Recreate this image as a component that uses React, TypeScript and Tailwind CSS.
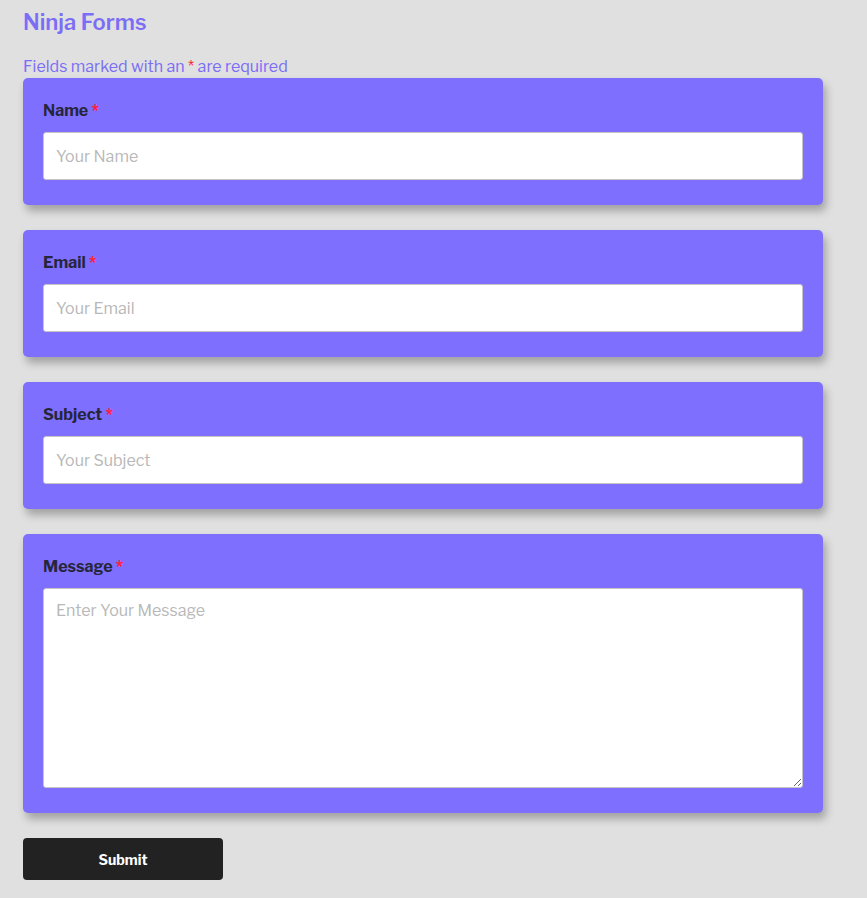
import React from 'react';

interface FieldProps {
  label: string;
  placeholder: string;
  multiline?: boolean;
}

const Field: React.FC<FieldProps> = ({ label, placeholder, multiline = false }) => (
  <div className="w-[800px] rounded-[5px] bg-[#7f6fff] px-5 pt-[22px] pb-[25px] shadow-[3px_6px_8px_rgba(0,0,0,0.28)]">
    <label className="block text-[16px] font-bold leading-[22px] text-[#26263a] mb-[10px]">
      {label} <span className="text-[#ff1f3d]">*</span>
    </label>
    {multiline ? (
      <textarea
        placeholder={placeholder}
        className="block w-full h-[200px] rounded-[3px] border border-[#c6c6c6] bg-white px-3 py-[10px] text-[16px] text-[#333] placeholder:text-[#b8b8b8] outline-none resize-y"
      />
    ) : (
      <input
        placeholder={placeholder}
        className="block w-full h-[48px] rounded-[3px] border border-[#c6c6c6] bg-white px-3 text-[16px] text-[#333] placeholder:text-[#b8b8b8] outline-none"
      />
    )}
  </div>
);

export default function App() {
  return (
    <div
      className="min-h-[898px] w-full bg-[#e0e0e0] px-[23px] pt-[8px]"
      style={{ fontFamily: '"Libre Franklin", Inter, "Liberation Sans", sans-serif' }}
    >
      <h1 className="text-[22px] font-semibold leading-[28px] text-[#7b6df5]">Ninja Forms</h1>
      <p className="mt-[21px] text-[16px] leading-[20px] text-[#7b6df5]">
        Fields marked with an <span className="text-[#ff1f3d]">*</span> are required
      </p>
      <div className="mt-[1px] flex flex-col gap-[25px]">
        <Field label="Name" placeholder="Your Name" />
        <Field label="Email" placeholder="Your Email" />
        <Field label="Subject" placeholder="Your Subject" />
        <Field label="Message" placeholder="Enter Your Message" multiline />
      </div>
      <button className="mt-[25px] h-[42px] w-[200px] rounded-[4px] bg-[#222222] text-[14px] font-bold text-white">
        Submit
      </button>
    </div>
  );
}
